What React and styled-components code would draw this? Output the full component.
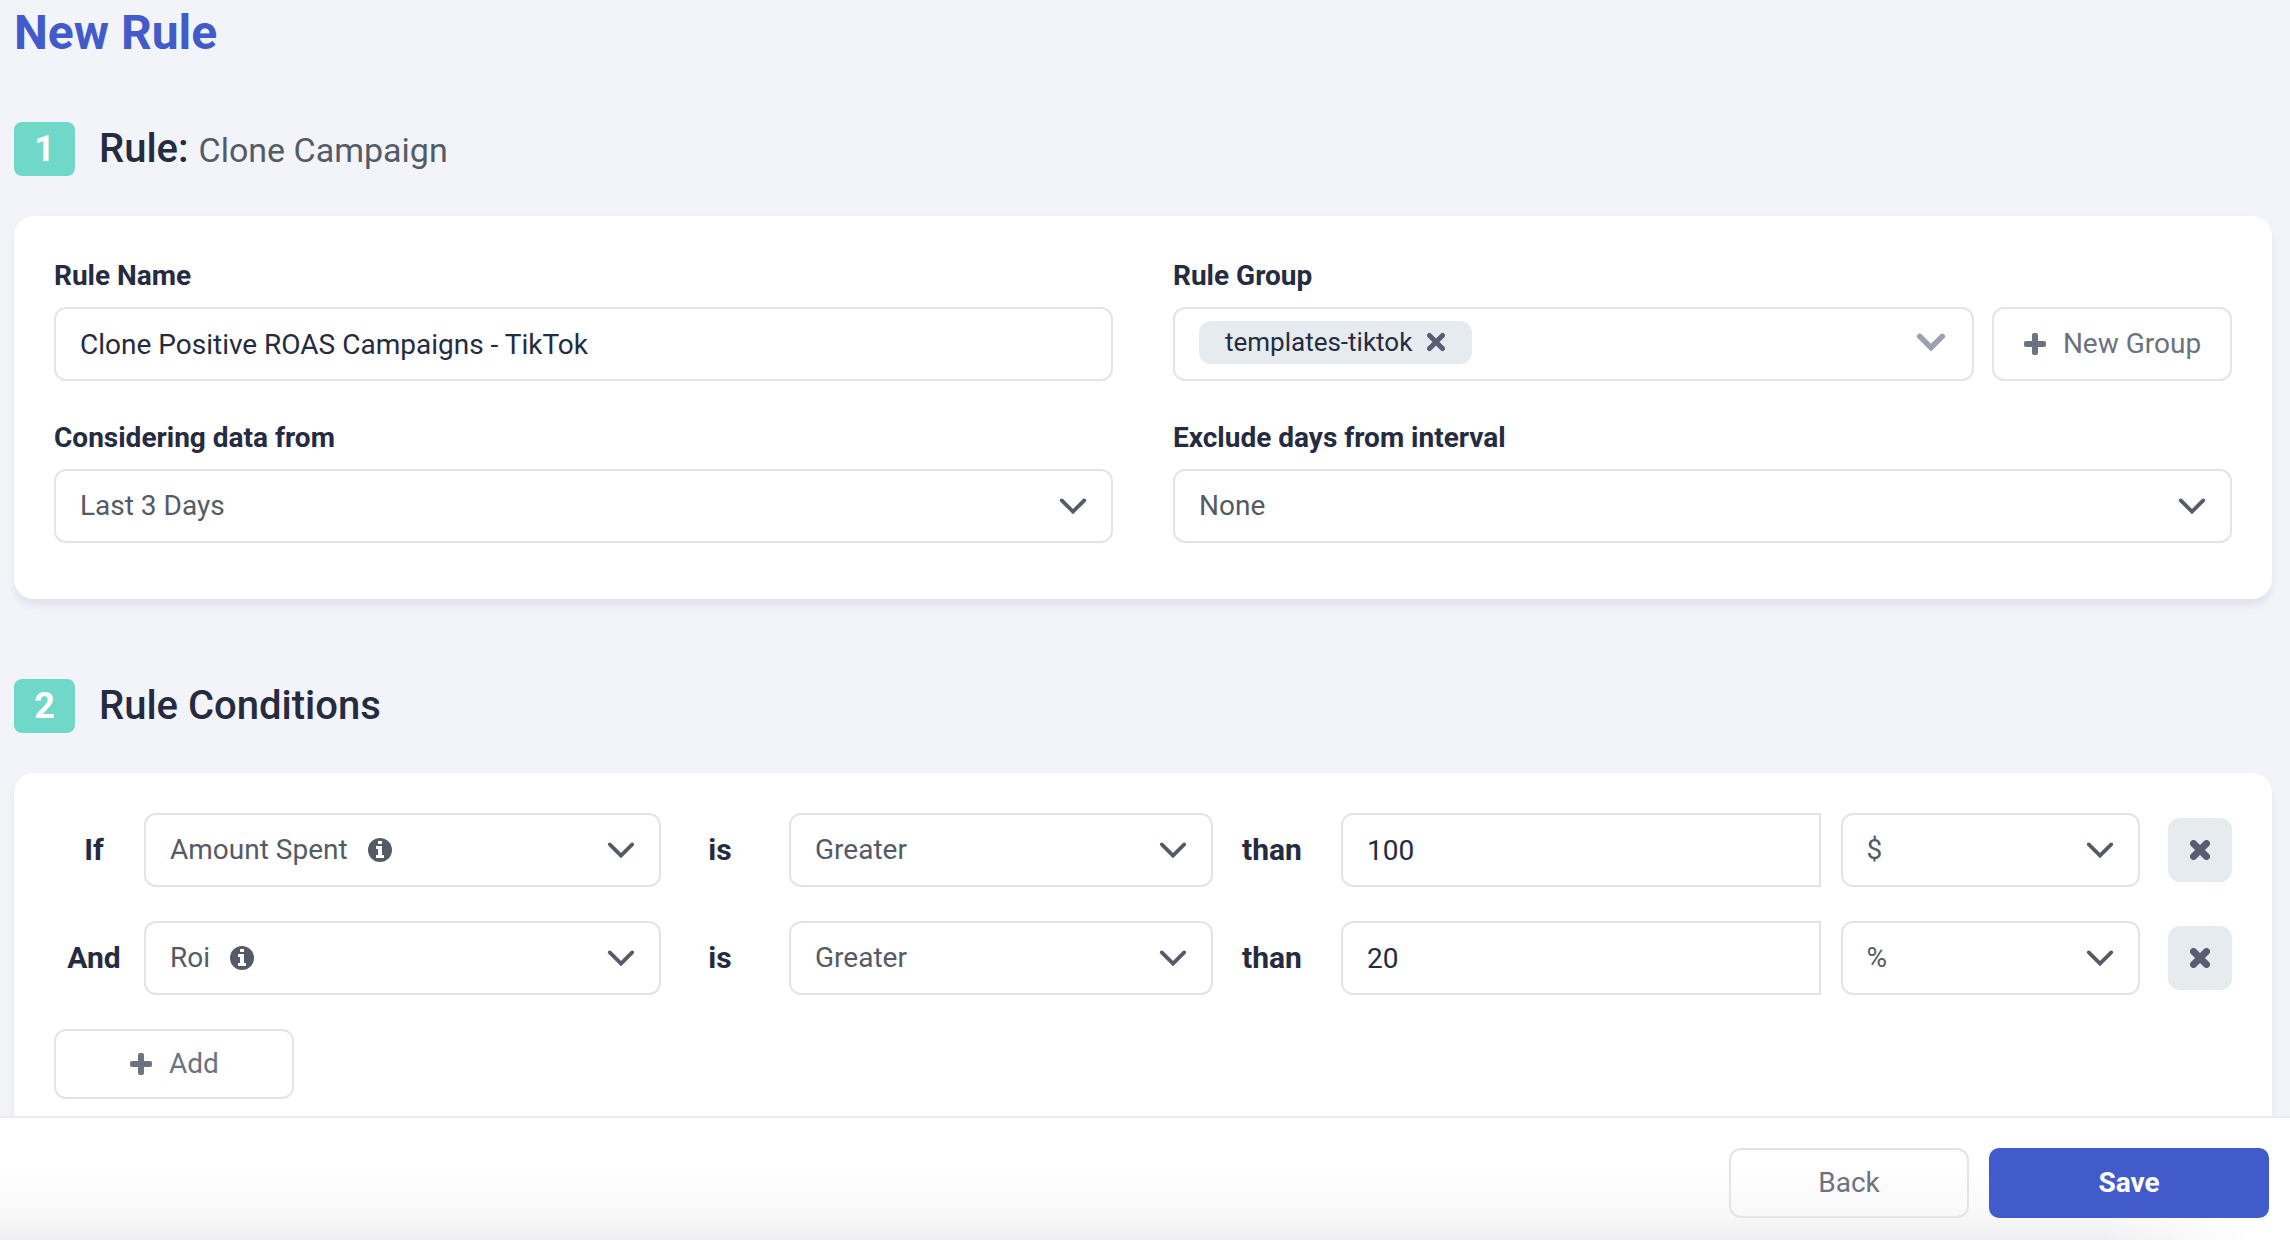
import React, { useState } from 'react';
import styled, { createGlobalStyle } from 'styled-components';

const GlobalStyle = createGlobalStyle`
  * {
    box-sizing: border-box;
  }

  body {
    margin: 0;
    background: #f3f4fa;
    color: #252b41;
    font-family: Roboto, sans-serif;
    font-size: 28px;
    line-height: 32px;
  }

  button,
  input,
  select {
    font: inherit;
    margin: 0;
  }
`;

const Page = styled.div`
  display: flex;
  flex-direction: column;
  height: 100vh;
`;

const Content = styled.main`
  flex: 1;
  min-height: 0;
  padding: 0 18px 0 14px;
  overflow-y: auto;
  scrollbar-width: none;
`;

const PageTitle = styled.h1`
  margin: 5px 0 61px;
  color: #425bcb;
  font-size: 48px;
  font-weight: 700;
  line-height: 56px;
`;

const Section = styled.section`
  margin-bottom: 80px;
`;

const SectionHeader = styled.header`
  display: flex;
  align-items: center;
  gap: 24px;
  margin-bottom: 40px;
`;

const Step = styled.span`
  width: 61px;
  border-radius: 8px;
  background: #6fd8c8;
  color: #fff;
  font-size: 36px;
  font-weight: 700;
  line-height: 54px;
  text-align: center;
`;

const SectionTitle = styled.h2`
  margin: 0;
  font-size: 40px;
  font-weight: 500;
  line-height: 54px;

  small {
    color: #555b66;
    font-size: 34px;
    font-weight: 400;
    line-height: 1;
  }
`;

const Card = styled.div`
  padding: 40px 40px 56px;
  border-radius: 20px;
  background: #fff;
  box-shadow: 0 8px 6px rgba(37, 43, 90, 0.05), 0 4px 12px rgba(37, 43, 90, 0.03);
`;

const FieldGrid = styled.div`
  display: grid;
  grid-template-columns: repeat(2, minmax(0, 1fr));
  gap: 37px 60px;
`;

const Field = styled.div`
  display: flex;
  flex-direction: column;
  gap: 11px;
`;

const Label = styled.label`
  font-weight: 700;
  line-height: 40px;
`;

const Inline = styled.div`
  display: flex;
  gap: 18px;
`;

const Frame = styled.div`
  display: flex;
  flex: 1;
  align-items: center;
  min-width: 0;
  height: 74px;
  padding: 0 23px 0 24px;
  border: 2px solid #e4e4e4;
  border-radius: 12px;
  background: #fff;
  color: #555b66;
`;

const TextInput = styled.input`
  width: 100%;
  height: 74px;
  padding: 0 24px;
  border: 2px solid #e4e4e4;
  border-radius: ${({ $joined }) => ($joined ? '12px 0 0 12px' : '12px')};
  background: #fff;
  color: #252b41;
  outline: none;
`;

const NativeSelect = styled.select`
  flex: ${({ $fit }) => ($fit ? 'none' : '1')};
  field-sizing: ${({ $fit }) => ($fit ? 'content' : 'fixed')};
  min-width: 0;
  height: 70px;
  padding: 0;
  border: 0;
  background: none;
  color: inherit;
  appearance: none;
  outline: none;
`;

const InfoSvg = styled.svg`
  flex: none;
  width: 24px;
  height: 24px;
  margin-left: 20px;
`;

const ChevronIcon = styled.svg`
  flex: none;
  width: 30px;
  height: 30px;
  margin-left: auto;
  fill: none;
  stroke: currentColor;
  stroke-width: 2;
  stroke-linecap: round;
  pointer-events: none;
`;

const Chip = styled.span`
  display: flex;
  flex: none;
  align-items: center;
  gap: 14px;
  height: 43px;
  margin-bottom: 4px;
  padding: 0 26px;
  border-radius: 12px;
  background: #e6ebef;
  color: #252b41;
  font-size: 26px;
`;

const ChipRemove = styled.button`
  display: flex;
  padding: 0;
  border: 0;
  background: none;
  color: #585d74;
  cursor: pointer;
`;

const GroupSearch = styled.input`
  flex: 1;
  min-width: 0;
  height: 60px;
  border: 0;
  background: none;
  outline: none;
`;

const GroupToggle = styled.button`
  display: flex;
  padding: 0 3px 4px 0;
  border: 0;
  background: none;
  color: #9b9fae;
  cursor: pointer;

  svg {
    stroke-width: 3;
  }
`;

const Button = styled.button`
  display: flex;
  flex: none;
  align-items: center;
  justify-content: center;
  gap: 16px;
  width: ${({ $primary }) => ($primary ? '280px' : '240px')};
  height: ${({ $tall }) => ($tall ? '74px' : '70px')};
  padding: 0;
  border: 2px solid ${({ $primary }) => ($primary ? '#425bcb' : '#e4e4e4')};
  border-radius: ${({ $primary }) => ($primary ? '10px' : '12px')};
  background: ${({ $primary }) => ($primary ? '#425bcb' : 'transparent')};
  color: ${({ $primary }) => ($primary ? '#fff' : '#6c7280')};
  font-weight: ${({ $primary }) => ($primary ? 700 : 400)};
  cursor: pointer;
`;

const ConditionList = styled.div`
  display: flex;
  flex-direction: column;
  gap: 34px;
  margin-bottom: 34px;
`;

const ConditionRow = styled.div`
  display: grid;
  grid-template-columns: 90px minmax(0, 517fr) 128px minmax(0, 424fr) 128px minmax(0, 799fr) 92px;
  align-items: center;
`;

const Word = styled.span`
  padding-right: 10px;
  font-size: 30px;
  font-weight: 700;
  text-align: center;
`;

const ValueGroup = styled.div`
  display: grid;
  grid-template-columns: minmax(0, 479fr) minmax(0, 299fr);
  gap: 20px;
`;

const RemoveButton = styled.button`
  display: flex;
  align-items: center;
  justify-content: center;
  justify-self: end;
  width: 64px;
  height: 64px;
  padding: 0;
  border: 0;
  border-radius: 12px;
  background: #e6ebef;
  color: #585d74;
  cursor: pointer;
`;

const Footer = styled.footer`
  display: flex;
  flex: none;
  justify-content: flex-end;
  gap: 20px;
  padding: 30px 21px 22px;
  border-top: 2px solid #ececee;
  background:
    linear-gradient(to right, rgba(255, 255, 255, 0) calc(100% - 190px), #fff calc(100% - 40px)),
    linear-gradient(#fff 35%, #fafafa 75%, #efeff1);
`;

const Chevron = () => (
  <ChevronIcon viewBox="0 0 16 16" aria-hidden="true">
    <path d="m2 5 6 6 6-6" />
  </ChevronIcon>
);

const Cross = ({ weight }) => (
  <svg width="20" height="20" viewBox="0 0 20 20" aria-hidden="true">
    <path
      d="M3.5 3.5l13 13M16.5 3.5l-13 13"
      stroke="currentColor"
      strokeWidth={weight}
      strokeLinecap="round"
    />
  </svg>
);

const Plus = () => (
  <svg width="24" height="24" viewBox="0 0 24 24" fill="currentColor" aria-hidden="true">
    <rect x="9" y="1" width="6" height="22" rx="2" />
    <rect x="1" y="9" width="22" height="6" rx="2" />
  </svg>
);

const InfoIcon = () => (
  <InfoSvg viewBox="0 0 24 24" aria-hidden="true">
    <circle cx="12" cy="12" r="12" fill="currentColor" />
    <path d="M10 3h4v3h-4zM8 8h6v9h2v3H8v-3h2v-6H8z" fill="#fff" />
  </InfoSvg>
);

const Select = ({ options, info, ...props }) => (
  <Frame>
    <NativeSelect $fit={info} {...props}>
      {options.map((option) => (
        <option key={option}>{option}</option>
      ))}
    </NativeSelect>
    {info && <InfoIcon />}
    <Chevron />
  </Frame>
);

const initialConditions = [
  { id: 1, metric: 'Amount Spent', value: '100', unit: '$' },
  { id: 2, metric: 'Roi', value: '20', unit: '%' },
];

const App = () => {
  const [name, setName] = useState('Clone Positive ROAS Campaigns - TikTok');
  const [groups, setGroups] = useState(['templates-tiktok']);
  const [conditions, setConditions] = useState(initialConditions);

  const addCondition = () =>
    setConditions([...conditions, { id: Date.now(), metric: 'Roi', value: '', unit: '%' }]);

  const removeCondition = (id) => setConditions(conditions.filter((item) => item.id !== id));

  return (
    <Page>
      <GlobalStyle />
      <Content>
        <PageTitle>New Rule</PageTitle>

        <Section>
          <SectionHeader>
            <Step>1</Step>
            <SectionTitle>
              Rule: <small>Clone Campaign</small>
            </SectionTitle>
          </SectionHeader>
          <Card>
            <FieldGrid>
              <Field>
                <Label htmlFor="name">Rule Name</Label>
                <TextInput id="name" value={name} onChange={(e) => setName(e.target.value)} />
              </Field>
              <Field>
                <Label htmlFor="group">Rule Group</Label>
                <Inline>
                  <Frame>
                    {groups.map((group) => (
                      <Chip key={group}>
                        {group}
                        <ChipRemove
                          aria-label={`Remove ${group}`}
                          onClick={() => setGroups(groups.filter((item) => item !== group))}
                        >
                          <Cross weight={5} />
                        </ChipRemove>
                      </Chip>
                    ))}
                    <GroupSearch id="group" />
                    <GroupToggle aria-label="Show groups">
                      <Chevron />
                    </GroupToggle>
                  </Frame>
                  <Button $tall>
                    <Plus />
                    New Group
                  </Button>
                </Inline>
              </Field>
              <Field>
                <Label htmlFor="interval">Considering data from</Label>
                <Select id="interval" options={['Last 3 Days', 'Last 7 Days', 'Last 30 Days']} />
              </Field>
              <Field>
                <Label htmlFor="exclude">Exclude days from interval</Label>
                <Select id="exclude" options={['None', 'Today', 'Yesterday']} />
              </Field>
            </FieldGrid>
          </Card>
        </Section>

        <Section>
          <SectionHeader>
            <Step>2</Step>
            <SectionTitle>Rule Conditions</SectionTitle>
          </SectionHeader>
          <Card>
            <ConditionList>
              {conditions.map(({ id, metric, value, unit }, index) => (
                <ConditionRow key={id}>
                  <Word>{index === 0 ? 'If' : 'And'}</Word>
                  <Select
                    info
                    aria-label="Metric"
                    options={['Amount Spent', 'Roi']}
                    defaultValue={metric}
                  />
                  <Word>is</Word>
                  <Select aria-label="Comparison" options={['Greater', 'Less']} />
                  <Word>than</Word>
                  <ValueGroup>
                    <TextInput $joined aria-label="Value" defaultValue={value} />
                    <Select aria-label="Unit" options={['$', '%']} defaultValue={unit} />
                  </ValueGroup>
                  <RemoveButton aria-label="Remove condition" onClick={() => removeCondition(id)}>
                    <Cross weight={7} />
                  </RemoveButton>
                </ConditionRow>
              ))}
            </ConditionList>
            <Button onClick={addCondition}>
              <Plus />
              Add
            </Button>
          </Card>
        </Section>
      </Content>

      <Footer>
        <Button>Back</Button>
        <Button $primary>Save</Button>
      </Footer>
    </Page>
  );
};

export default App;
